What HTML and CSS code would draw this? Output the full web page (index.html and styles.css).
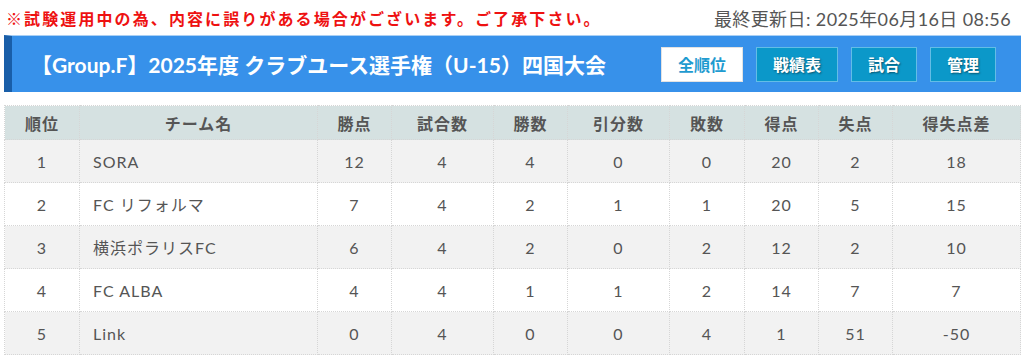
FILE: index.html
```html
<!DOCTYPE html>
<html lang="ja">
<head>
<meta charset="utf-8">
<title>順位表</title>
<link rel="stylesheet" href="styles.css">
</head>
<body>
<div class="page">
  <div class="topbar">
    <p class="notice">※試験運用中の為、内容に誤りがある場合がございます。ご了承下さい。</p>
    <p class="updated">最終更新日: 2025年06月16日 08:56</p>
  </div>
  <div class="banner">
    <h1 class="title">【Group.F】2025年度 クラブユース選手権（U-15）四国大会</h1>
    <nav class="nav">
      <a class="btn btn-active">全順位</a>
      <a class="btn">戦績表</a>
      <a class="btn">試合</a>
      <a class="btn">管理</a>
    </nav>
  </div>
  <table class="standings">
    <colgroup>
      <col class="c-rank"><col class="c-team"><col class="c-pts"><col class="c-played"><col class="c-win"><col class="c-draw"><col class="c-loss"><col class="c-gf"><col class="c-ga"><col class="c-gd">
    </colgroup>
    <thead>
      <tr><th>順位</th><th>チーム名</th><th>勝点</th><th>試合数</th><th>勝数</th><th>引分数</th><th>敗数</th><th>得点</th><th>失点</th><th>得失点差</th></tr>
    </thead>
    <tbody>
      <tr><td>1</td><td class="team">SORA</td><td>12</td><td>4</td><td>4</td><td>0</td><td>0</td><td>20</td><td>2</td><td>18</td></tr>
      <tr><td>2</td><td class="team">FC リフォルマ</td><td>7</td><td>4</td><td>2</td><td>1</td><td>1</td><td>20</td><td>5</td><td>15</td></tr>
      <tr><td>3</td><td class="team">横浜ポラリスFC</td><td>6</td><td>4</td><td>2</td><td>0</td><td>2</td><td>12</td><td>2</td><td>10</td></tr>
      <tr><td>4</td><td class="team">FC ALBA</td><td>4</td><td>4</td><td>1</td><td>1</td><td>2</td><td>14</td><td>7</td><td>7</td></tr>
      <tr><td>5</td><td class="team">Link</td><td>0</td><td>4</td><td>0</td><td>0</td><td>4</td><td>1</td><td>51</td><td>-50</td></tr>
    </tbody>
  </table>
</div>
</body>
</html>
```
FILE: styles.css
```css
html, body {
  margin: 0;
  padding: 0;
  background: #ffffff;
}
body {
  font-family: Lato, "Noto Sans CJK JP", sans-serif;
  color: #555555;
}
.page {
  padding: 0 3px 0 4px;
}
.topbar {
  display: flex;
  justify-content: space-between;
  align-items: center;
  height: 35px;
}
.notice {
  margin: 0 0 0 2px;
  color: #ee1111;
  font-weight: bold;
  font-size: 16px;
  letter-spacing: 2.1px;
}
.updated {
  margin: 0 10px 0 0;
  color: #555555;
  font-size: 18px;
  letter-spacing: 0.4px;
}
.banner {
  display: flex;
  justify-content: space-between;
  align-items: center;
  height: 56px;
  background: #3791ea;
  border-left: 8px solid #195ea8;
  border-top: 1px solid #a9d0f5;
  padding: 0 25px 0 19px;
}
.title {
  margin: 0;
  color: #ffffff;
  font-size: 21px;
  font-weight: bold;
  letter-spacing: 0;
}
.nav {
  display: flex;
  gap: 13px;
}
.btn {
  display: flex;
  align-items: center;
  justify-content: center;
  height: 33px;
  padding: 0 16px;
  border: 1px solid #63bde6;
  background: #0b98c9;
  color: #ffffff;
  font-size: 16px;
  font-weight: bold;
  text-shadow: 1px 1px 2px rgba(0, 0, 0, 0.45);
}
.btn-active {
  background: #ffffff;
  color: #1f9bd0;
  border-color: #e2e2e2;
  text-shadow: none;
}
.standings {
  margin-top: 13px;
  width: 1016px;
  border-collapse: collapse;
  table-layout: fixed;
  font-size: 16px;
}
.c-rank { width: 75px; }
.c-team { width: 238px; }
.c-pts { width: 74px; }
.c-played { width: 102px; }
.c-win { width: 74px; }
.c-draw { width: 102px; }
.c-loss { width: 75px; }
.c-gf { width: 74px; }
.c-ga { width: 74px; }
.c-gd { width: 128px; }
.standings th,
.standings td {
  border: 1px dotted #d6d6d6;
  text-align: center;
  padding: 0;
}
.standings th {
  height: 33px;
  background: #d5e1e1;
  font-weight: bold;
  font-size: 16px;
  color: #555555;
  letter-spacing: 1px;
}
.standings td {
  height: 42px;
  color: #555555;
  letter-spacing: 1px;
}
.standings tbody tr:nth-child(odd) td {
  background: #f2f2f2;
}
.standings tbody tr:nth-child(even) td {
  background: #ffffff;
}
.standings td.team {
  text-align: left;
  padding-left: 13px;
}
```
